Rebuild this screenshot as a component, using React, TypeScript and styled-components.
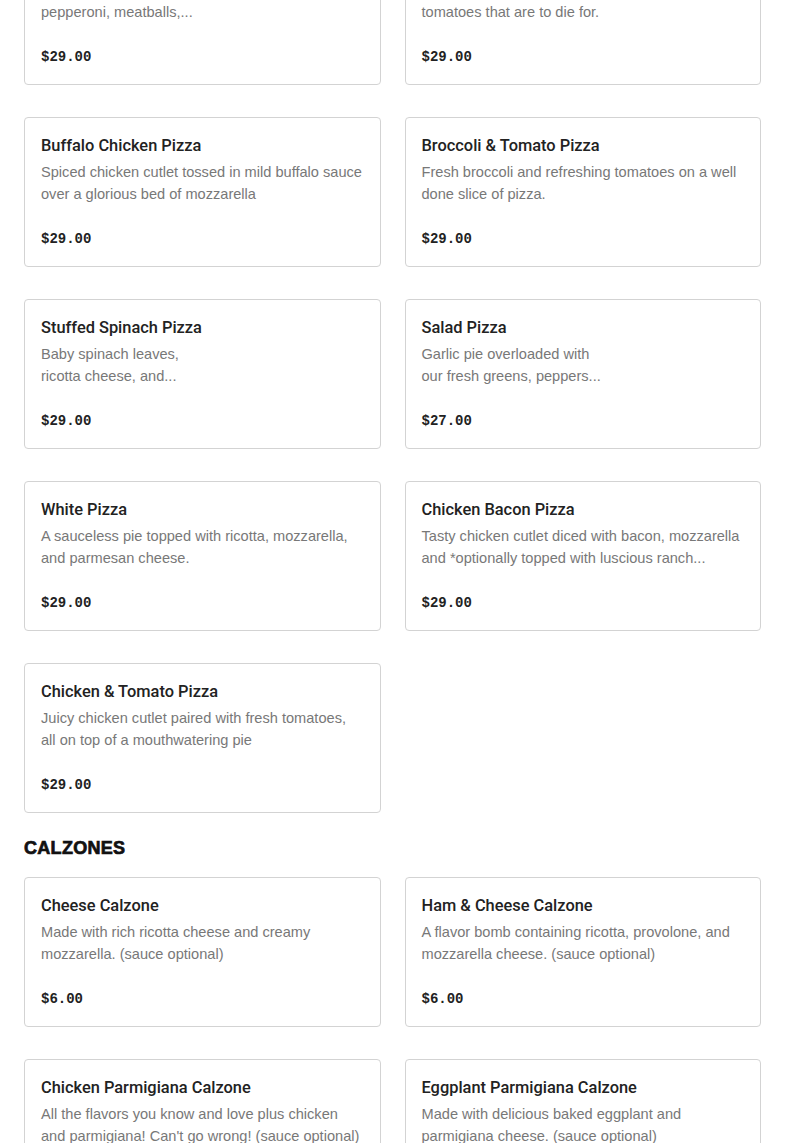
import React from "react";
import styled, { createGlobalStyle } from "styled-components";

const Global = createGlobalStyle`
  html, body { margin: 0; padding: 0; background: #ffffff; }
  body { font-family: "Liberation Sans", Arial, sans-serif; color: #222222; }
  * { box-sizing: border-box; }
`;

const Viewport = styled.div`
  height: 1143px;
  overflow: hidden;
`;

const Page = styled.main`
  padding: 0 24px;
  margin-top: -65px;
`;

const Section = styled.section`
  display: flex;
  flex-direction: column;
`;

const SectionTitle = styled.h2`
  margin: 22px 0 16px;
  font-family: "Liberation Sans", Arial, sans-serif;
  font-weight: 900;
  font-size: 18px;
  line-height: 26px;
  letter-spacing: 0.3px;
  color: #111111;
  -webkit-text-stroke: 0.7px #111111;
`;

const Grid = styled.div`
  display: grid;
  grid-template-columns: 1fr 1fr;
  column-gap: 24px;
  row-gap: 32px;
`;

const Card = styled.article`
  border: 1px solid #d3d3d3;
  border-radius: 4px;
  padding: 16px;
  height: 150px;
  display: flex;
  flex-direction: column;
  background: #fff;
`;

const ItemName = styled.h3`
  margin: 0;
  font-family: Roboto, "Liberation Sans", sans-serif;
  font-weight: 500;
  font-size: 16.4px;
  line-height: 23px;
  color: #222222;
`;

const ItemDesc = styled.p`
  margin: 4px 0 0;
  font-family: "Liberation Sans", Arial, sans-serif;
  font-size: 14.6px;
  line-height: 22px;
  color: #787878;
  white-space: pre;
  height: 44px;
`;

const Price = styled.div`
  margin-top: 23px;
  font-family: "Liberation Mono", "Courier New", monospace;
  font-weight: 700;
  font-size: 14px;
  line-height: 22px;
  color: #222222;
`;

type Item = { name: string; desc: string; price: string };

const pizzas: Item[] = [
  { name: "Meat Lovers Pizza", desc: "Loaded with sausage, bacon,\npepperoni, meatballs,...", price: "$29.00" },
  { name: "Margherita Pizza", desc: "Fresh mozzarella, basil and ripe plum\ntomatoes that are to die for.", price: "$29.00" },
  { name: "Buffalo Chicken Pizza", desc: "Spiced chicken cutlet tossed in mild buffalo sauce\nover a glorious bed of mozzarella", price: "$29.00" },
  { name: "Broccoli & Tomato Pizza", desc: "Fresh broccoli and refreshing tomatoes on a well\ndone slice of pizza.", price: "$29.00" },
  { name: "Stuffed Spinach Pizza", desc: "Baby spinach leaves,\nricotta cheese, and...", price: "$29.00" },
  { name: "Salad Pizza", desc: "Garlic pie overloaded with\nour fresh greens, peppers...", price: "$27.00" },
  { name: "White Pizza", desc: "A sauceless pie topped with ricotta, mozzarella,\nand parmesan cheese.", price: "$29.00" },
  { name: "Chicken Bacon Pizza", desc: "Tasty chicken cutlet diced with bacon, mozzarella\nand *optionally topped with luscious ranch...", price: "$29.00" },
  { name: "Chicken & Tomato Pizza", desc: "Juicy chicken cutlet paired with fresh tomatoes,\nall on top of a mouthwatering pie", price: "$29.00" },
];

const calzones: Item[] = [
  { name: "Cheese Calzone", desc: "Made with rich ricotta cheese and creamy\nmozzarella. (sauce optional)", price: "$6.00" },
  { name: "Ham & Cheese Calzone", desc: "A flavor bomb containing ricotta, provolone, and\nmozzarella cheese. (sauce optional)", price: "$6.00" },
  { name: "Chicken Parmigiana Calzone", desc: "All the flavors you know and love plus chicken\nand parmigiana! Can't go wrong! (sauce optional)", price: "$6.00" },
  { name: "Eggplant Parmigiana Calzone", desc: "Made with delicious baked eggplant and\nparmigiana cheese. (sauce optional)", price: "$6.00" },
];

const MenuCard = ({ item }: { item: Item }) => (
  <Card>
    <ItemName>{item.name}</ItemName>
    <ItemDesc>{item.desc}</ItemDesc>
    <Price>{item.price}</Price>
  </Card>
);

export default function App() {
  return (
    <Viewport>
      <Global />
      <Page>
        <Section>
          <Grid>
            {pizzas.map((p) => (
              <MenuCard key={p.name} item={p} />
            ))}
          </Grid>
        </Section>
        <Section>
          <SectionTitle>CALZONES</SectionTitle>
          <Grid>
            {calzones.map((p) => (
              <MenuCard key={p.name} item={p} />
            ))}
          </Grid>
        </Section>
      </Page>
    </Viewport>
  );
}
